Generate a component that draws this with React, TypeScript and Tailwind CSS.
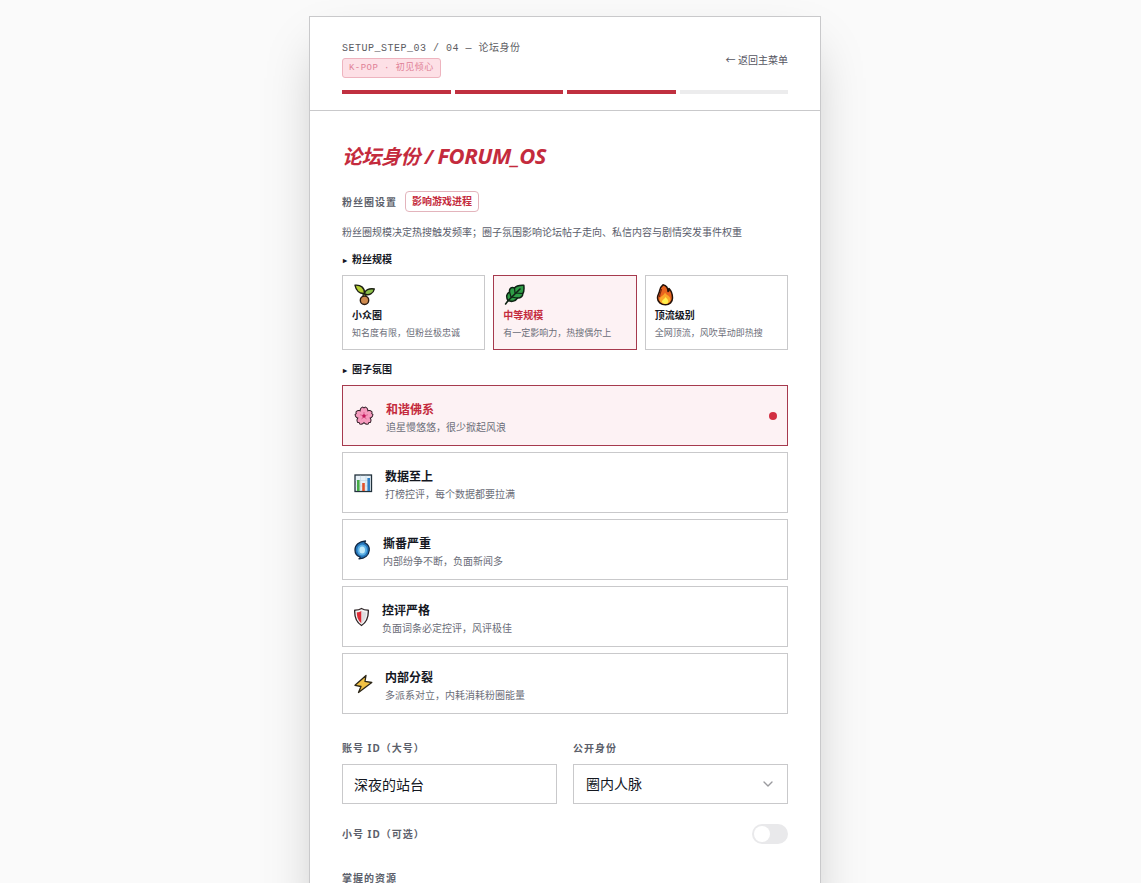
import { useState } from 'react';
import type { ReactNode } from 'react';
import { ChevronDown } from 'lucide-react';

interface Option {
  id: string;
  name: string;
  desc: string;
  icon: ReactNode;
}

const SeedlingIcon = () => (
  <svg width="24" height="22" viewBox="0 0 24 22" strokeLinejoin="round" aria-hidden="true">
    <path d="M12.5 15V8" stroke="#1c1f14" strokeWidth="4" fill="none" />
    <path d="M12.5 15V8" stroke="#8fb833" strokeWidth="1.6" fill="none" />
    <path d="M12.5 9.5C7.5 10 4 6.500 3 1.200C8.500 .6 12.800 3.500 12.500 9.500Z" fill="#b5cf33" stroke="#1c1f14" strokeWidth="1.4" />
    <path d="M12.500 10C12.800 6 17 4.200 22.300 5C21.500 9.500 17 12 12.500 10Z" fill="#8cc04a" stroke="#1c1f14" strokeWidth="1.4" />
    <circle cx="12.500" cy="16.300" r="4.200" fill="#cf8a4e" stroke="#2a1a10" strokeWidth="1.4" />
  </svg>
);

const HerbIcon = () => (
  <svg width="24" height="22" viewBox="0 0 24 22" strokeLinejoin="round" strokeLinecap="round" aria-hidden="true">
    <path d="M5 16.500C2.800 13 3.500 9.500 6.500 8C6 4.500 8.500 2.500 11.500 4C13.500 1.200 17 1 20.800 1.200C21.200 4.500 21.300 7.500 19.800 9.500C20 12.500 17.500 14.200 14.500 14C12.500 17.200 8.500 18.300 5 16.500Z" fill="#2f9c46" stroke="#0f2315" strokeWidth="1.500" />
    <path d="M6.500 8L8 13L14.500 14M11.500 4L12 9L19.800 9.500" fill="none" stroke="#0f2315" strokeWidth="1.200" />
    <path d="M2.600 20L5 16.800L17 5" fill="none" stroke="#0f2315" strokeWidth="1.600" />
  </svg>
);

const FireIcon = () => (
  <svg width="20" height="22" viewBox="0 0 20 22" strokeLinejoin="round" aria-hidden="true">
    <path d="M8 .8C11 1.500 13 4 13 7.500C14 7 14.200 5.800 14 4.500C16.500 7 17.500 10.500 17.500 14C17.500 18 14.500 20.800 10.500 20.800C6 20.800 2.500 18 2.500 14C2.500 11 4 9.500 4.500 7.500C5 5.500 5 3 8 .8Z" fill="#e9641f" stroke="#241209" strokeWidth="1.500" />
    <path d="M6.500 5C6 8.500 4.500 10 4.500 13" fill="none" stroke="#7d260f" strokeWidth="1.200" />
    <path d="M10 8.500C11 11 15.500 12 15.500 15.300C15.500 18.300 13 20 10.400 20C7.500 20 4.500 18.200 4.500 15.300C4.500 13 8.500 12 10 8.500Z" fill="#fba62a" />
    <path d="M10.500 13C12 14.800 13.300 16 13.300 17.300C13.300 19 12 19.900 10.400 19.900C8.500 19.900 7 19 7 17.300C7 16 9.500 15.500 10.500 13Z" fill="#fff04d" />
  </svg>
);

const petals = [0, 72, 144, 216, 288];
const petalPath = 'M10 10L6.800 6.500C6.200 4.200 6.800 2.400 8.600 1.500L10 2.400L11.400 1.500C13.200 2.400 13.800 4.200 13.200 6.500Z';

const BlossomIcon = () => (
  <svg width="20" height="20" viewBox="0 0 20 20" aria-hidden="true">
    {petals.map(angle => (
      <path key={angle} d={petalPath} transform={`rotate(${angle} 10 10)`} fill="#2a1720" stroke="#2a1720" strokeWidth="1.800" strokeLinejoin="round" />
    ))}
    {petals.map(angle => (
      <path key={angle} d={petalPath} transform={`rotate(${angle} 10 10)`} fill="#f59abd" />
    ))}
    <circle cx="10" cy="10" r="4" fill="#f59abd" />
    {petals.map(angle => (
      <path key={angle} d="M10 9V6" transform={`rotate(${angle} 10 10)`} stroke="#d9608f" strokeWidth=".9" />
    ))}
    <circle cx="10" cy="10" r="1.700" fill="#c2185b" />
  </svg>
);

const ChartIcon = () => (
  <svg width="19" height="20" viewBox="0 0 19 20" aria-hidden="true">
    <rect x="1" y="2" width="16.500" height="16.500" fill="#e7f1f8" stroke="#22323c" strokeWidth="1.300" />
    <path d="M6.500 2.700V18M12 2.700V18M1.700 7.500H17M1.700 13H17" stroke="#c3d8e6" strokeWidth=".7" />
    <rect x="3" y="7" width="2.600" height="11" fill="#46ab45" />
    <rect x="8.200" y="10" width="2.600" height="8" fill="#e2512b" />
    <rect x="13.400" y="5" width="2.600" height="13" fill="#2f7fc4" />
  </svg>
);

const CycloneIcon = () => (
  <svg width="17" height="20" viewBox="0 0 17 20" aria-hidden="true">
    <path d="M11.500 1C10.800 1.800 10.700 2.300 11 3C14 4.300 15.600 7 15.200 10.500C14.800 15 11 18.500 5 18.800C6 18.200 6.300 17.600 6.200 17C3 16 1 13.300 1 10C1 5 5 1.500 11.500 1Z" fill="#2476bb" stroke="#0f2540" strokeWidth="1.300" strokeLinejoin="round" />
    <ellipse cx="8.200" cy="10" rx="4.800" ry="5.500" fill="#5db1e6" />
    <ellipse cx="8.200" cy="10" rx="2.800" ry="3.500" fill="#c3ebfa" />
  </svg>
);

const ShieldIcon = () => (
  <svg width="16" height="20" viewBox="0 0 16 20" aria-hidden="true">
    <path d="M7.500 1.500C9.500 2.800 11.500 3.300 14.300 3.200C14.600 10 13 15 7.500 18.500C2 15 .4 10 .7 3.200C3.500 3.300 5.500 2.800 7.500 1.500Z" fill="#f4f4f4" stroke="#2d2426" strokeWidth="1.300" strokeLinejoin="round" />
    <path d="M7.500 4C6 4.900 4.500 5.200 2.800 5.200C2.900 10 4 13.500 7.500 16.300Z" fill="#dc2a35" />
    <path d="M7.500 4C9 4.900 10.500 5.200 12.200 5.200C12.100 10 11 13.500 7.500 16.300Z" fill="#dedee0" />
  </svg>
);

const BoltIcon = () => (
  <svg width="19" height="20" viewBox="0 0 19 20" aria-hidden="true">
    <path d="M12 1.500L1 11.300L7 12.500L4.500 18.500L17.800 8.500L11 7.300Z" fill="#f2c244" stroke="#2c2617" strokeWidth="1.300" strokeLinejoin="round" />
  </svg>
);

const scales: Option[] = [
  { id: 'niche', name: '小众圈', desc: '知名度有限\uff0c但粉丝极忠诚', icon: <SeedlingIcon /> },
  { id: 'medium', name: '中等规模', desc: '有一定影响力\uff0c热搜偶尔上', icon: <HerbIcon /> },
  { id: 'top', name: '顶流级别', desc: '全网顶流\uff0c风吹草动即热搜', icon: <FireIcon /> },
];

const moods: Option[] = [
  { id: 'calm', name: '和谐佛系', desc: '追星慢悠悠\uff0c很少掀起风浪', icon: <BlossomIcon /> },
  { id: 'data', name: '数据至上', desc: '打榜控评\uff0c每个数据都要拉满', icon: <ChartIcon /> },
  { id: 'fight', name: '撕番严重', desc: '内部纷争不断\uff0c负面新闻多', icon: <CycloneIcon /> },
  { id: 'control', name: '控评严格', desc: '负面词条必定控评\uff0c风评极佳', icon: <ShieldIcon /> },
  { id: 'split', name: '内部分裂', desc: '多派系对立\uff0c内耗消耗粉圈能量', icon: <BoltIcon /> },
];

const labelClass = 'text-[10px] leading-4 font-bold tracking-widest text-[#5c5f6b]';

function App() {
  const [scale, setScale] = useState('medium');
  const [mood, setMood] = useState('calm');
  const [account, setAccount] = useState('深夜的站台');
  const [identity, setIdentity] = useState('圈内人脉');
  const [hasAlt, setHasAlt] = useState(false);

  return (
    <div className="h-screen overflow-y-auto bg-[#fafafa] py-4 pr-[11px] font-['Noto_Sans','Noto_Sans_CJK_SC',sans-serif] text-[#14171f] [scrollbar-width:none]">
      <div className="mx-auto max-w-lg border border-[#c9c9cb] bg-white shadow-2xl">
        <header className="border-b border-[#c9c9cb] px-8 pt-6 pb-4">
          <div className="flex items-center justify-between">
            <div className="font-['Liberation_Mono','Noto_Sans_CJK_SC',monospace]">
              <div className="text-[10px] leading-4 tracking-wider text-[#5c5c62]">SETUP_STEP_03 / 04 — 论坛身份</div>
              <div className="mt-px w-fit rounded-[3px] border border-[#eeb4bf] bg-[#fde0e6] px-[6px] text-[9px] leading-[18px] tracking-wider text-[#df8096]">
                K-POP · 初见倾心
              </div>
            </div>
            <button className="text-[10px] leading-4 text-[#55555f]">← 返回主菜单</button>
          </div>
          <div className="mt-3 flex gap-1">
            {[1, 2, 3, 4].map(step => (
              <div key={step} className={`h-1 flex-1 ${step <= 3 ? 'bg-[#c03040]' : 'bg-[#ececed]'}`}></div>
            ))}
          </div>
        </header>

        <main className="p-8">
          <h1 className="text-xl leading-7 font-bold tracking-tight text-[#c42b3d] italic">
            论坛身份 / <span className="text-[22px] leading-6">FORUM_OS</span>
          </h1>

          {/* 粉丝圈设置 */}
          <div className="mt-5 flex items-center gap-2">
            <h2 className={labelClass}>粉丝圈设置</h2>
            <span className="rounded border border-[#e3b4bc] px-[6px] text-[10px] leading-[19px] font-bold text-[#c42b3d]">影响游戏进程</span>
          </div>
          <p className="mt-3 text-[10px] leading-4 text-[#5a5d6b]">
            {'粉丝圈规模决定热搜触发频率\uff1b圈子氛围影响论坛帖子走向、私信内容与剧情突发事件权重'}
          </p>

          <h3 className="mt-3 flex gap-1 text-[10px] leading-[15px] font-bold">
            <span className="w-[6px] text-center text-[8px]">▸</span>粉丝规模
          </h3>
          <div className="mt-2 grid grid-cols-3 gap-2">
            {scales.map(item => (
              <button
                key={item.id}
                onClick={() => setScale(item.id)}
                className={`border px-[9px] py-2 text-left ${scale === item.id ? 'border-[#a63a4e] bg-[#fdf2f4]' : 'border-[#c9c9cb] bg-white'}`}
              >
                <div className="h-5">{item.icon}</div>
                <div className={`mt-1 text-[10px] leading-[15px] font-bold ${scale === item.id ? 'text-[#c42b3d]' : ''}`}>{item.name}</div>
                <div className="mt-0.5 text-[9px] leading-4 whitespace-nowrap text-[#6b6d78]">{item.desc}</div>
              </button>
            ))}
          </div>

          <h3 className="mt-3 flex gap-1 text-[10px] leading-[15px] font-bold">
            <span className="w-[6px] text-center text-[8px]">▸</span>圈子氛围
          </h3>
          <div className="mt-2 flex flex-col gap-[6px]">
            {moods.map(item => (
              <button
                key={item.id}
                onClick={() => setMood(item.id)}
                className={`flex items-center gap-3 border py-2.5 pr-2.5 pl-[11px] text-left ${mood === item.id ? 'border-[#a63a4e] bg-[#fdf2f4]' : 'border-[#c9c9cb] bg-white'}`}
              >
                {item.icon}
                <div className="flex-1 pt-1.5">
                  <div className={`text-xs leading-4 font-bold ${mood === item.id ? 'text-[#c42b3d]' : ''}`}>{item.name}</div>
                  <div className="mt-0.5 text-[10px] leading-[15px] text-[#6b6d78]">{item.desc}</div>
                </div>
                {mood === item.id && <span className="size-2 rounded-full bg-[#d22f42]"></span>}
              </button>
            ))}
          </div>

          {/* 账号信息 */}
          <div className="mt-6.5 grid grid-cols-2 gap-4">
            <div className="flex flex-col gap-2">
              <label htmlFor="account" className={labelClass}>{'账号 ID\uff08大号\uff09'}</label>
              <input
                id="account"
                value={account}
                onChange={e => setAccount(e.target.value)}
                className="h-10 w-full border border-[#c9c9cb] bg-white px-[11px] text-sm outline-none"
              />
            </div>
            <div className="flex flex-col gap-2">
              <label htmlFor="identity" className={labelClass}>公开身份</label>
              <div className="relative">
                <select
                  id="identity"
                  value={identity}
                  onChange={e => setIdentity(e.target.value)}
                  className="h-10 w-full appearance-none border border-[#c9c9cb] bg-white px-3 text-sm outline-none"
                >
                  <option>圈内人脉</option>
                </select>
                <ChevronDown size={16} className="pointer-events-none absolute top-3 right-3 text-[#9a9a9e]" />
              </div>
            </div>
          </div>

          <div className="mt-5 flex items-center justify-between">
            <label htmlFor="alt" className={labelClass}>{'小号 ID\uff08可选\uff09'}</label>
            <input
              id="alt"
              type="checkbox"
              role="switch"
              checked={hasAlt}
              onChange={e => setHasAlt(e.target.checked)}
              className="h-5 w-9 appearance-none rounded-full bg-[#e9e9eb] p-0.5 before:block before:size-4 before:rounded-full before:bg-white checked:bg-[#c03040] checked:before:ml-auto"
            />
          </div>

          <h2 className={`mt-6.5 ${labelClass}`}>掌握的资源</h2>
        </main>
      </div>
    </div>
  );
}

export default App;
